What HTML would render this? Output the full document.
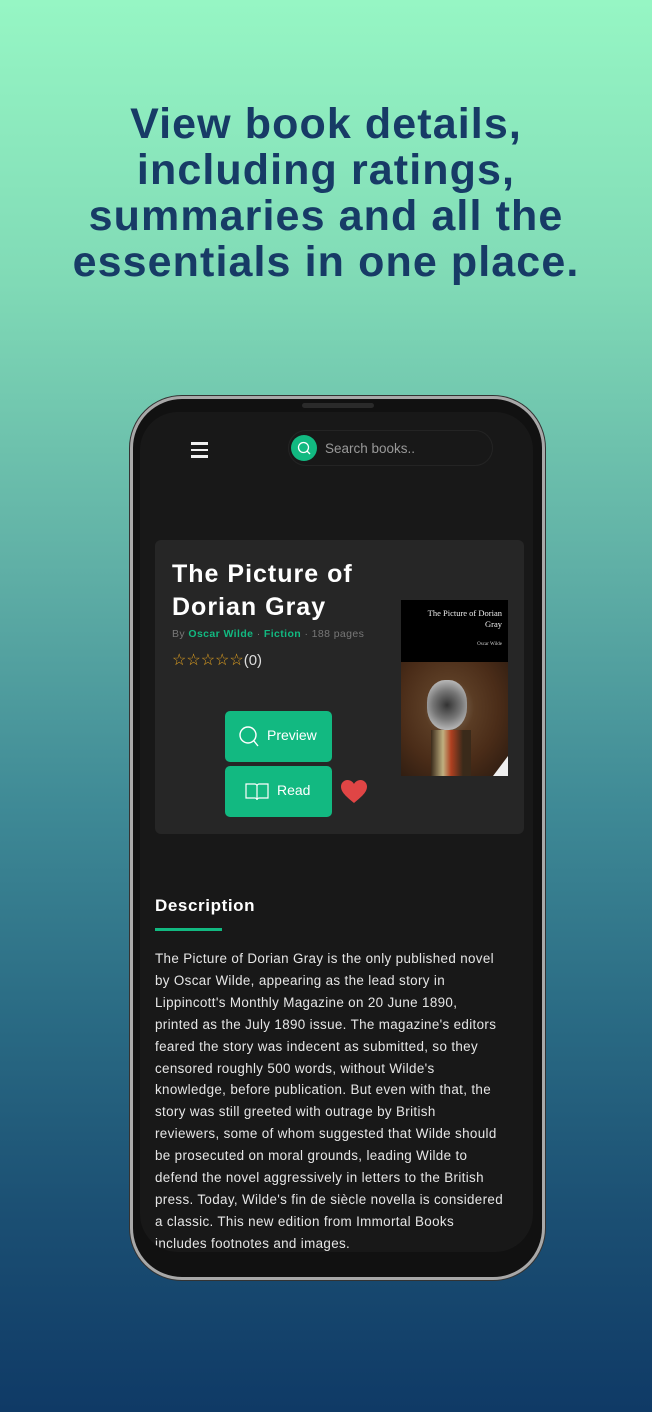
<!DOCTYPE html>
<html><head><meta charset="utf-8"><style>
*{margin:0;padding:0;box-sizing:border-box}
body{width:652px;height:1412px;overflow:hidden;font-family:"Liberation Sans",sans-serif;background:linear-gradient(180deg,#96f6c4 0%,#80dab6 20%,#60b0a6 40%,#3f8a96 57%,#2a6b84 72%,#1b4f73 86%,#0f3a66 100%);position:relative}
h1{position:absolute;top:101px;left:0;width:652px;text-align:center;font-size:43px;line-height:46px;font-weight:bold;color:#173b66;letter-spacing:1.1px}
.phone{position:absolute;left:130px;top:396px;width:415px;height:884px;border-radius:52px;background:#111;border:3px solid #a8a8a8;box-shadow:0 0 0 1px #333}
.screen{position:absolute;left:140px;top:412px;width:393px;height:840px;border-radius:38px;background:#181818;overflow:hidden}
.notch{position:absolute;left:302px;top:403px;width:72px;height:5px;border-radius:3px;background:#2a2a2a}
.ham{position:absolute;left:51px;top:30px;width:17px}
.ham i{display:block;height:2.5px;background:#eee;margin-bottom:4px}
.search{position:absolute;left:148px;top:18px;width:205px;height:36px;border-radius:18px;border:1px solid #242424}
.sicon{position:absolute;left:2px;top:4px;width:26px;height:26px;border-radius:50%;background:#12b981}
.stext{position:absolute;left:36px;top:10px;color:#999;font-size:13.5px}
.card{position:absolute;left:15px;top:128px;width:369px;height:294px;background:#262626;border-radius:6px}
.title{position:absolute;left:17px;top:18px;color:#fff;font-size:25px;font-weight:bold;line-height:33px;letter-spacing:1px}
.meta{position:absolute;left:17px;top:88px;font-size:10.5px;color:#777;letter-spacing:0.4px}
.meta b{color:#12b981}
.stars{position:absolute;left:17px;top:110px;font-size:16px;color:#e0a020}
.stars span{color:#ddd;font-size:15px}
.cover{position:absolute;left:246px;top:60px;width:107px;height:176px;background:#000;overflow:hidden}
.cover .t{color:#eee;font-family:"Liberation Serif",serif;font-size:8.5px;text-align:right;padding:8px 6px 0 0;line-height:11px}
.cover .a{color:#ccc;font-family:"Liberation Serif",serif;font-size:5px;text-align:right;padding:12px 6px 0 0}
.btn{position:absolute;left:70px;width:107px;height:51px;background:#12b981;border-radius:5px;color:#fff;font-size:14px}
.btn span{position:absolute;top:16px}
.desc{position:absolute;left:15px;top:484px;color:#fff;font-size:17px;font-weight:bold;letter-spacing:0.6px}
.bar{position:absolute;left:15px;top:516px;width:67px;height:3px;background:#12b981}
.p{position:absolute;left:15px;top:536px;width:380px;color:#e6e6e6;font-size:13.4px;line-height:21.9px;white-space:nowrap;letter-spacing:0.35px}
</style></head><body>
<h1>View book details,<br>including ratings,<br>summaries and all the<br>essentials in one place.</h1>
<div class="phone"></div>
<div class="screen">
<div class="ham"><i></i><i></i><i></i></div>
<div class="search"><div class="sicon"><svg width="26" height="26" viewBox="0 0 26 26"><circle cx="12.5" cy="12.5" r="5" fill="none" stroke="#fff" stroke-width="1.3"/><path d="M16 16l3 3" stroke="#fff" stroke-width="1.3"/></svg></div><div class="stext">Search books..</div></div>
<div class="card">
<div class="title">The Picture of<br>Dorian Gray</div>
<div class="meta">By <b>Oscar Wilde</b> · <b>Fiction</b> · 188 pages</div>
<div class="stars">☆☆☆☆☆<span>(0)</span></div>
<div class="cover"><div class="t">The Picture of Dorian<br>Gray</div><div class="a">Oscar Wilde</div>
<div style="position:absolute;left:0;top:62px;width:107px;height:114px;background:radial-gradient(ellipse at 45% 40%,#8a7a68 0%,#5a3c24 30%,#4a2c18 60%,#2a1a10 100%)"></div>
<div style="position:absolute;left:26px;top:80px;width:40px;height:50px;border-radius:45%;background:radial-gradient(circle,#333 0%,#777 45%,#bbb 80%,#8a7a6a 100%)"></div>
<div style="position:absolute;left:30px;top:130px;width:40px;height:46px;background:linear-gradient(90deg,#3a2a1a,#c0b080 30%,#b04020 50%,#3a2a1a 80%)"></div>
<div style="position:absolute;left:92px;top:156px;width:15px;height:20px;background:#eee;clip-path:polygon(100% 0,100% 100%,0 100%)"></div>
</div>
<div class="btn" style="top:171px"><svg style="position:absolute;left:13px;top:13px" width="24" height="26" viewBox="0 0 24 26"><circle cx="10" cy="11" r="8" fill="none" stroke="#fff" stroke-width="1.4"/><path d="M16 17l4 5" stroke="#fff" stroke-width="1.4"/></svg><span style="left:42px">Preview</span></div>
<div class="btn" style="top:226px"><svg style="position:absolute;left:19px;top:14px" width="26" height="22" viewBox="0 0 26 22"><path d="M2 4h9c1 0 2 1 2 2v14c0-1-1-2-2-2H2z M24 4h-9c-1 0-2 1-2 2v14c0-1 1-2 2-2h9z" fill="none" stroke="#fff" stroke-width="1.2"/></svg><span style="left:52px">Read</span></div>
<svg style="position:absolute;left:185px;top:239px" width="28" height="26" viewBox="0 0 28 26"><path d="M14 24C4 16 1 12 1 7.5 1 4 4 1 7.5 1 10.5 1 13 3 14 5 15 3 17.5 1 20.5 1 24 1 27 4 27 7.5 27 12 24 16 14 24z" fill="#e04545"/></svg>
</div>
<div class="desc">Description</div><div class="bar"></div>
<div class="p">The Picture of Dorian Gray is the only published novel<br>by Oscar Wilde, appearing as the lead story in<br>Lippincott's Monthly Magazine on 20 June 1890,<br>printed as the July 1890 issue. The magazine's editors<br>feared the story was indecent as submitted, so they<br>censored roughly 500 words, without Wilde's<br>knowledge, before publication. But even with that, the<br>story was still greeted with outrage by British<br>reviewers, some of whom suggested that Wilde should<br>be prosecuted on moral grounds, leading Wilde to<br>defend the novel aggressively in letters to the British<br>press. Today, Wilde's fin de siècle novella is considered<br>a classic. This new edition from Immortal Books<br>includes footnotes and images.</div>
</div>
<div class="notch"></div>
</body></html>
